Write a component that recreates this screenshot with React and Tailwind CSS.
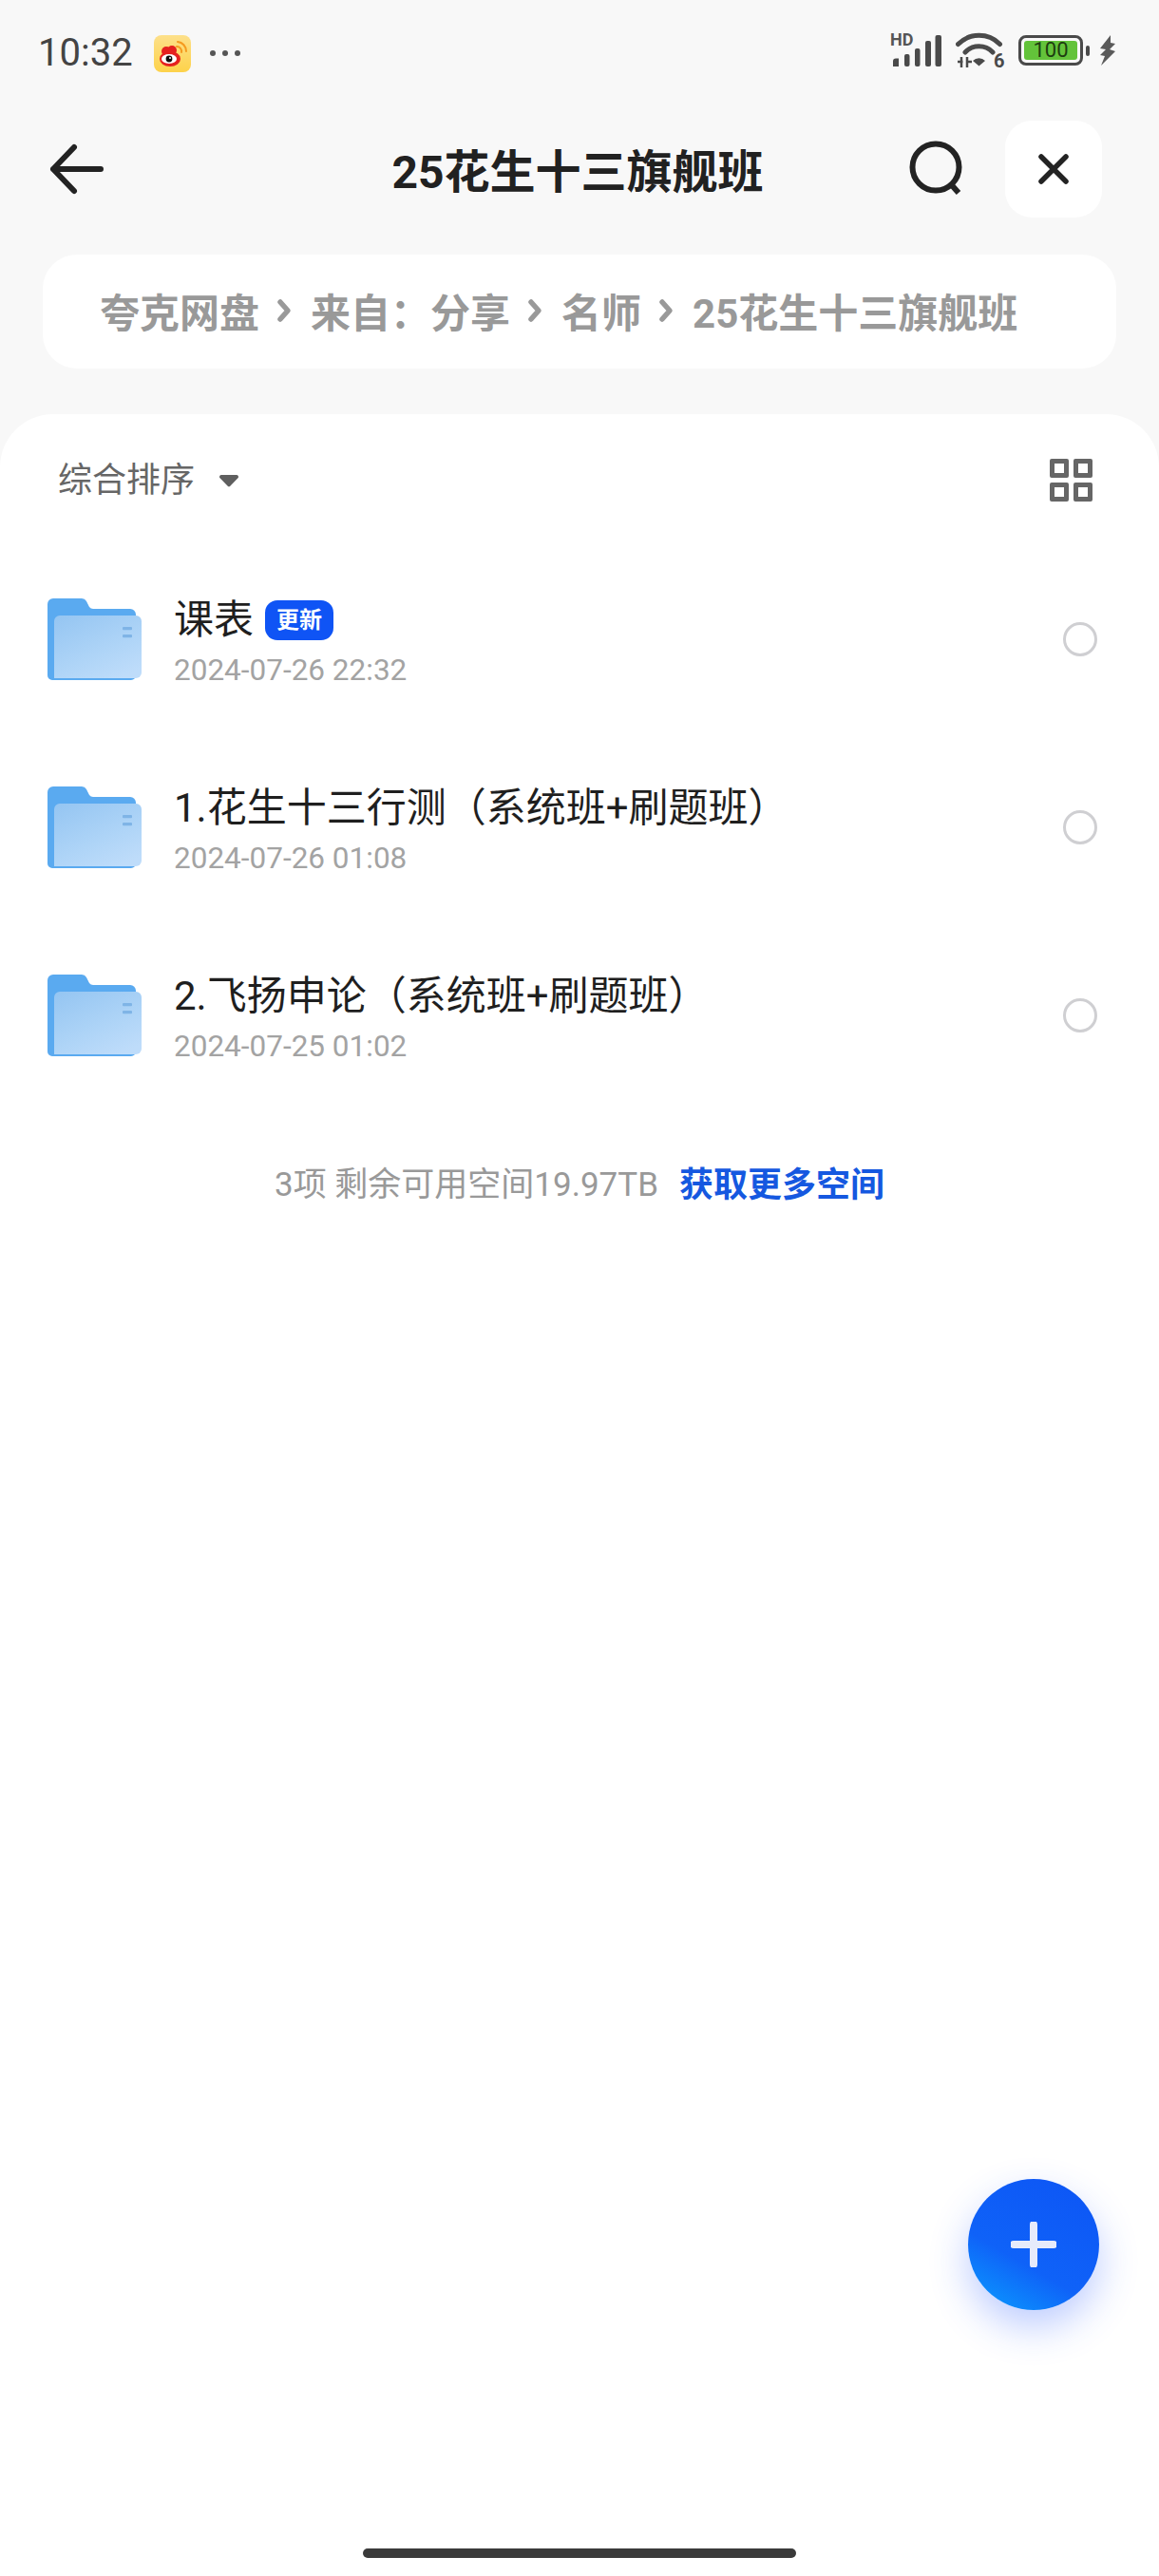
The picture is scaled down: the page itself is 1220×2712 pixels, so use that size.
import React from "react";

function Folder() {
  return (
    <svg width="100" height="90" viewBox="0 0 100 90" className="shrink-0">
      <defs>
        <linearGradient id="fg" x1="0.1" y1="0" x2="0.75" y2="1">
          <stop offset="0" stopColor="#96c6f2" />
          <stop offset="0.6" stopColor="#aed4f7" />
          <stop offset="1" stopColor="#bedcfa" />
        </linearGradient>
      </defs>
      <path d="M0 8a6 6 0 0 1 6-6h30a6 6 0 0 1 5 3l3 6a5 5 0 0 0 4 2h39a6 6 0 0 1 6 6v64a5 5 0 0 1-5 5H5a5 5 0 0 1-5-5z" fill="#5aaaf0" />
      <path d="M7 26a6 6 0 0 1 6-6h80a6 6 0 0 1 6 6v54a6 6 0 0 1-6 6H7z" fill="url(#fg)" />
      <rect x="79" y="32" width="10" height="3.2" rx="1" fill="#7fb4e6" />
      <rect x="79" y="40" width="10" height="3.2" rx="1" fill="#7fb4e6" />
    </svg>
  );
}
function Row({ name, date, badge }) {
  return (
    <div className="flex items-center h-[198px] pl-[50px] pr-[65px]">
      <Folder />
      <div className="ml-[33px] flex-1 flex flex-col pt-[5px]">
        <div className="flex items-center h-[54px]">
          <span className="text-[42px] leading-[54px] text-[#1f1f1f]">{name}</span>
          {badge && (
            <span className="ml-[12px] h-[42px] w-[72px] rounded-[13px] bg-[#0f54f5] text-white text-[24px] font-bold flex items-center justify-center">更新</span>
          )}
        </div>
        <div className="mt-[7px] text-[31.5px] leading-[38px] text-[#a3a3a3]">{date}</div>
      </div>
      <div className="w-[36px] h-[36px] rounded-full border-[3px] border-[#cfcfd2]" />
    </div>
  );
}
function Chevron() {
  return (
    <svg width="20" height="26" viewBox="0 0 20 26" className="mx-[17px] mb-[6px] shrink-0">
      <path d="M5 4l8 9-8 9" fill="none" stroke="#999" strokeWidth="5.500" strokeLinecap="round" strokeLinejoin="round" />
    </svg>
  );
}
function Weibo() {
  return (
    <svg width="39" height="39" viewBox="0 0 39 39" className="ml-[22px]">
      <defs>
        <linearGradient id="wb" x1="0" y1="0" x2="0" y2="1">
          <stop offset="0" stopColor="#fde08a" />
          <stop offset="1" stopColor="#fdd24a" />
        </linearGradient>
      </defs>
      <rect width="39" height="39" rx="8" fill="url(#wb)" />
      <ellipse cx="17" cy="25" rx="11" ry="8" fill="#e5201e" />
      <circle cx="13" cy="17" r="5" fill="#e5201e" />
      <circle cx="19" cy="16" r="5" fill="#e5201e" />
      <ellipse cx="16" cy="25" rx="8" ry="5" fill="#fff" />
      <circle cx="16" cy="25" r="3.4" fill="#111" />
      <circle cx="17" cy="24" r="1" fill="#fff" />
      <path d="M24 12a5 5 0 0 1 5 6M25 7a10 10 0 0 1 9 10" fill="none" stroke="#f59a1f" strokeWidth="2" strokeLinecap="round" />
    </svg>
  );
}
function StatusIcons() {
  return (
    <div className="flex items-center h-[40px]">
      <div className="relative w-[54px] h-[36px]">
        <span className="absolute left-0 top-0 text-[18px] leading-[14px] font-bold text-[#555]">HD</span>
        <svg width="54" height="36" viewBox="0 0 54 36" className="absolute left-0 top-0">
          <path d="M3 29.500a3 3 0 0 1 3-3h3v8.500H3z" fill="#4a4a4a" />
          <rect x="15" y="22" width="5.500" height="13" rx="2" fill="#4a4a4a" />
          <rect x="26" y="16" width="5.500" height="19" rx="2" fill="#4a4a4a" />
          <rect x="37" y="8" width="6" height="27" rx="2" fill="#4a4a4a" />
          <rect x="47.500" y="2" width="6.500" height="33" rx="2" fill="#4a4a4a" />
        </svg>
      </div>
      <div className="relative ml-[15px] w-[54px] h-[38px]">
        <svg width="54" height="38" viewBox="0 0 54 38" className="absolute left-0 top-0">
          <path d="M2.500 12.500a31 31 0 0 1 44 0" fill="none" stroke="#4a4a4a" strokeWidth="5" strokeLinecap="round" />
          <path d="M10 21a20 20 0 0 1 29 0" fill="none" stroke="#4a4a4a" strokeWidth="5" strokeLinecap="round" />
          <path d="M18 30a9 9 0 0 1 13 0l-6.500 5.500z" fill="#4a4a4a" />
          <path d="M2 31h5.500M6 26v11M12 26v11M12 31h5" fill="none" stroke="#4a4a4a" strokeWidth="2.500" />
        </svg>
        <span className="absolute left-[40px] top-[22px] text-[20px] leading-[16px] font-bold text-[#4a4a4a]">6</span>
      </div>
      <div className="ml-[12px] w-[68px] h-[32px] rounded-[8px] border-[3px] border-[#4a4a4a] p-[3px] flex">
        <div className="flex-1 rounded-[3px] bg-[#63c33a] flex items-center justify-center text-[22px] leading-none text-[#1d3d10]">100</div>
      </div>
      <div className="ml-[3px] w-[4px] h-[11px] rounded-[2px] bg-[#4a4a4a]" />
      <svg width="19" height="34" viewBox="0 0 19 34" className="ml-[9px]">
        <path d="M13 1L2 15l6 1-6 6 5 1-4 10 15-15-6-2 6-6-5-1z" fill="#5a5a5a" />
      </svg>
    </div>
  );
}

export default function App() {
  return (
    <div className="relative w-[1220px] h-[2712px] overflow-hidden bg-[#f8f8f8] flex flex-col font-['Roboto','Noto_Sans_CJK_SC',sans-serif]">
      <div className="h-[127px] pt-[33px] pl-[40px] pr-[45px] flex items-start justify-between">
        <div className="flex items-center h-[46px]">
          <span className="text-[40px] leading-[46px] text-[#444]">10:32</span>
          <Weibo />
          <div className="ml-[20px] flex gap-[7px]">
            <span className="w-[6px] h-[6px] rounded-full bg-[#555]" />
            <span className="w-[6px] h-[6px] rounded-full bg-[#555]" />
            <span className="w-[6px] h-[6px] rounded-full bg-[#555]" />
          </div>
        </div>
        <StatusIcons />
      </div>

      <div className="h-[102px] flex items-center pl-[50px] pr-[60px]">
        <svg width="60" height="60" viewBox="0 0 60 60" className="shrink-0">
          <path d="M6 30h50M28 7L6 30l22 23" fill="none" stroke="#232323" strokeWidth="6" strokeLinecap="round" strokeLinejoin="round" />
        </svg>
        <div className="flex-1 pl-[150px] pt-[8px] text-center text-[48px] font-bold text-[#212121]">25花生十三旗舰班</div>
        <svg width="60" height="60" viewBox="0 0 60 60" className="shrink-0 mr-[42px]">
          <circle cx="29" cy="28" r="24.500" fill="none" stroke="#232323" strokeWidth="6" />
          <path d="M45 46l8 9" fill="none" stroke="#232323" strokeWidth="6" />
        </svg>
        <div className="w-[102px] h-[102px] rounded-[28px] bg-white flex items-center justify-center">
          <svg width="36" height="36" viewBox="0 0 36 36">
            <path d="M5 5l26 26M31 5L5 31" fill="none" stroke="#232323" strokeWidth="5.500" strokeLinecap="round" />
          </svg>
        </div>
      </div>

      <div className="mt-[39px] mx-[45px] h-[120px] rounded-[36px] bg-white flex items-center pl-[60px] pt-[4px] text-[42px] font-bold text-[#999] whitespace-nowrap">
        夸克网盘<Chevron />来自：分享<Chevron />名师<Chevron />25花生十三旗舰班
      </div>

      <div className="mt-[48px] flex-1 rounded-t-[56px] bg-white flex flex-col">
        <div className="h-[138px] flex items-center justify-between pl-[61px] pr-[70px]">
          <div className="flex items-center pt-[2px]">
            <span className="text-[36px] text-[#666]">综合排序</span>
            <svg width="22" height="14" viewBox="0 0 22 14" className="ml-[25px]">
              <path d="M3 1h16a2 2 0 0 1 1.500 3.300L12.500 12.500a2 2 0 0 1-3 0L1.500 4.300A2 2 0 0 1 3 1z" fill="#5f5f5f" />
            </svg>
          </div>
          <div className="grid grid-cols-2 gap-[5px]">
            <div className="w-[20px] h-[20px] rounded-[2px] border-[5px] border-[#666]" />
            <div className="w-[20px] h-[20px] rounded-[2px] border-[5px] border-[#666]" />
            <div className="w-[20px] h-[20px] rounded-[2px] border-[5px] border-[#666]" />
            <div className="w-[20px] h-[20px] rounded-[2px] border-[5px] border-[#666]" />
          </div>
        </div>
        <Row name="课表" date="2024-07-26 22:32" badge />
        <Row name="1.花生十三行测（系统班+刷题班）" date="2024-07-26 01:08" />
        <Row name="2.飞扬申论（系统班+刷题班）" date="2024-07-25 01:02" />
        <div className="mt-[55px] flex items-center justify-center h-[50px]">
          <span className="text-[35px] text-[#999]">3项 剩余可用空间19.97TB</span>
          <span className="ml-[22px] text-[36px] font-bold text-[#1558e0]">获取更多空间</span>
        </div>
        <div className="mt-auto mb-[19px] mx-auto w-[456px] h-[10px] rounded-full bg-[#3a3a3a]" />
      </div>

      <div className="absolute left-[1019px] top-[2294px] w-[138px] h-[138px] rounded-full bg-[linear-gradient(30deg,#0aa0ff_0%,#0f62f8_38%,#0d55f5_100%)] shadow-[0_18px_40px_rgba(40,90,255,0.3)] flex items-center justify-center">
        <svg width="48" height="48" viewBox="0 0 48 48">
          <path d="M24 3v42M3 24h42" fill="none" stroke="#e6ebfb" strokeWidth="8" strokeLinecap="round" />
        </svg>
      </div>
    </div>
  );
}
